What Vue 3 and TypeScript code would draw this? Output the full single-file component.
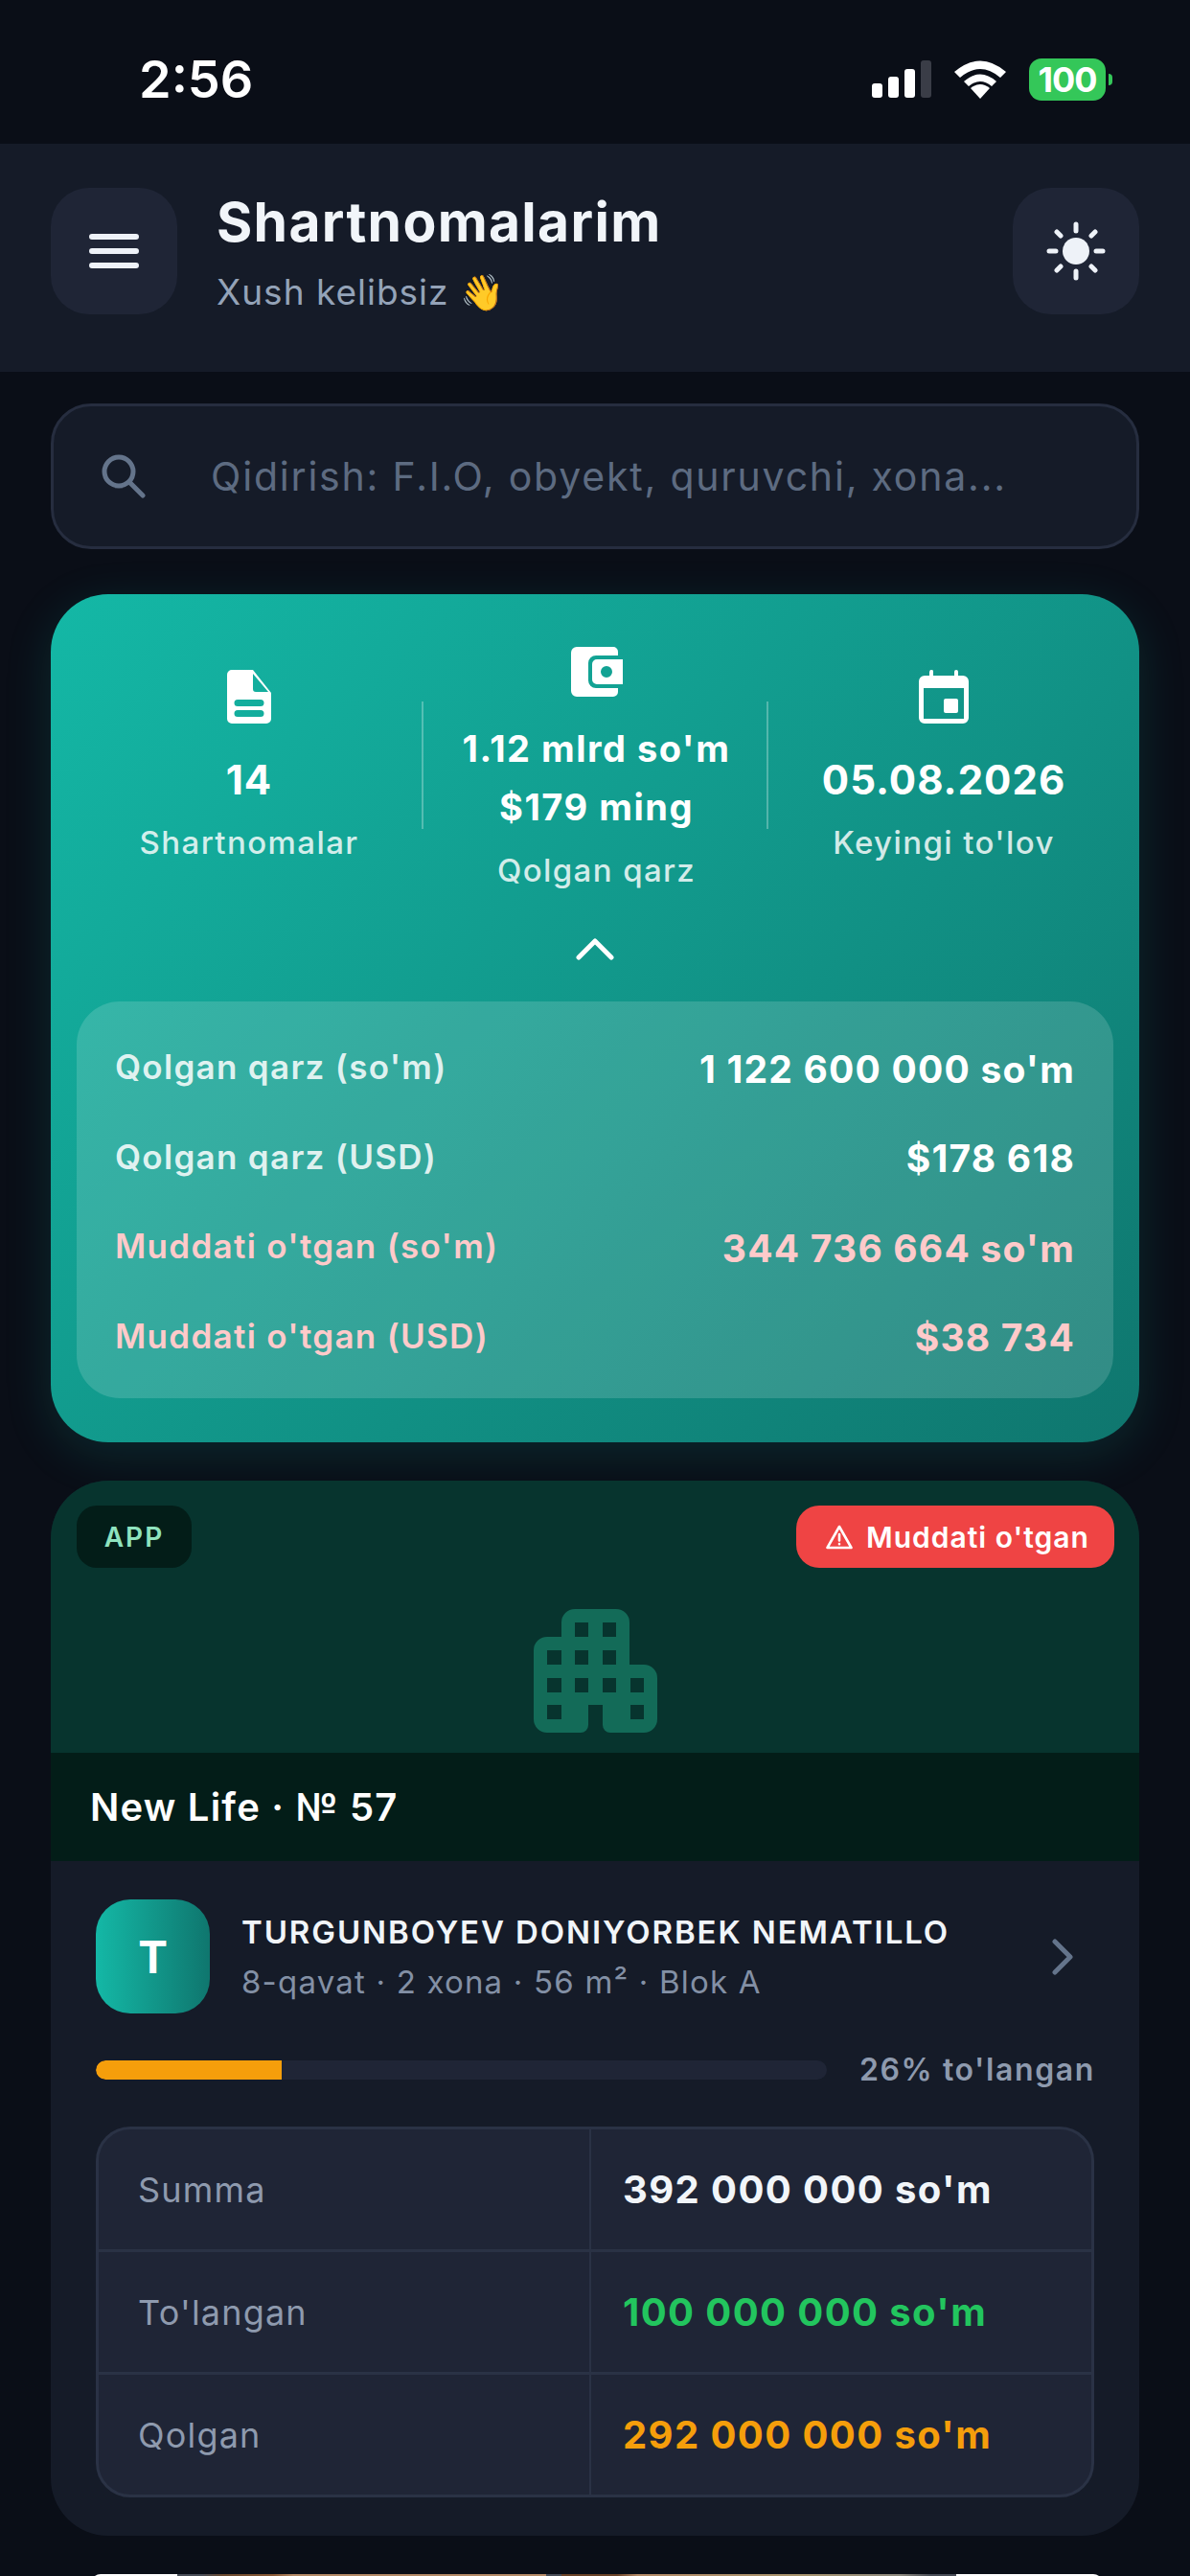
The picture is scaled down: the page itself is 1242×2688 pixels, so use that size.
<script setup lang="ts">
interface Stat { value: string[]; label: string; icon: string }
interface Row { label: string; value: string; overdue?: boolean }

const stats: Stat[] = [
  { value: ['14'], label: 'Shartnomalar', icon: 'doc' },
  { value: ["1.12 mlrd so'm", '$179 ming'], label: 'Qolgan qarz', icon: 'wallet' },
  { value: ['05.08.2026'], label: "Keyingi to'lov", icon: 'cal' }
]

const rows: Row[] = [
  { label: "Qolgan qarz (so'm)", value: "1 122 600 000 so'm" },
  { label: 'Qolgan qarz (USD)', value: '$178 618' },
  { label: "Muddati o'tgan (so'm)", value: "344 736 664 so'm", overdue: true },
  { label: "Muddati o'tgan (USD)", value: '$38 734', overdue: true }
]

const amounts = [
  { label: 'Summa', value: "392 000 000 so'm", cls: 'white' },
  { label: "To'langan", value: "100 000 000 so'm", cls: 'green' },
  { label: 'Qolgan', value: "292 000 000 so'm", cls: 'amber' }
]

const paid = 26
</script>

<template>
  <div class="screen">
    <div class="status">
      <span class="time">2:56</span>
      <div class="status-icons">
        <svg width="62" height="40" viewBox="0 0 62 40">
          <rect x="0" y="24" width="11" height="15" rx="3" fill="#fff" />
          <rect x="17" y="17" width="11" height="22" rx="3" fill="#fff" />
          <rect x="34" y="9" width="11" height="30" rx="3" fill="#fff" />
          <rect x="51" y="0" width="11" height="39" rx="3" fill="#3a3d47" />
        </svg>
        <svg width="54" height="40" viewBox="0 0 54 40">
          <path d="M27 40 L17 29 Q27 21 37 29 Z" fill="#fff" />
          <path d="M10 22 L15 27 Q27 17 39 27 L44 22 Q27 7 10 22 Z" fill="#fff" />
          <path d="M0 12 L6 18 Q27 0 48 18 L54 12 Q27 -11 0 12 Z" fill="#fff" />
        </svg>
        <div class="battery">
          <span class="battery-body">100</span>
          <span class="battery-tip"></span>
        </div>
      </div>
    </div>

    <header class="header">
      <button class="icon-btn">
        <svg width="52" height="40" viewBox="0 0 52 40" fill="none" stroke="#eef2f8" stroke-width="6" stroke-linecap="round">
          <path d="M3 5h46M3 20h46M3 35h46" />
        </svg>
      </button>
      <div class="titles">
        <div class="title">Shartnomalarim</div>
        <div class="subtitle">Xush kelibsiz 👋</div>
      </div>
      <button class="icon-btn">
        <svg width="62" height="62" viewBox="0 0 62 62" fill="none" stroke="#eef2f8" stroke-width="5" stroke-linecap="round">
          <circle cx="31" cy="31" r="14" fill="#eef2f8" stroke="none" />
          <path d="M31 3v7M31 52v7M3 31h7M52 31h7M11 11l4 4M47 47l4 4M11 51l4-4M47 15l4-4" />
        </svg>
      </button>
    </header>

    <main class="content">
      <div class="search">
        <svg width="50" height="50" viewBox="0 0 50 50" fill="none" stroke="#64748b" stroke-width="5" stroke-linecap="round">
          <circle cx="20" cy="20" r="15" />
          <path d="M31 31l14 14" />
        </svg>
        <span class="placeholder">Qidirish: F.I.O, obyekt, quruvchi, xona...</span>
      </div>

      <section class="hero">
        <div class="stats">
          <div v-for="s in stats" :key="s.label" class="stat">
            <svg v-if="s.icon === 'doc'" class="stat-icon" width="46" height="56" viewBox="0 0 46 56">
              <path fill="#fff" fill-rule="evenodd" d="M5 0h22l19 24v27a5 5 0 0 1-5 5H5a5 5 0 0 1-5-5V5a5 5 0 0 1 5-5zM27 4v16a3 3 0 0 0 3 3h13zM11 31a3 3 0 0 0 0 7h24a3 3 0 0 0 0-7zM11 42a3 3 0 0 0 0 7h24a3 3 0 0 0 0-7z" />
            </svg>
            <svg v-else-if="s.icon === 'wallet'" class="stat-icon" width="54" height="52" viewBox="0 0 54 52">
              <path fill="#fff" fill-rule="evenodd" d="M6 0h38a5 5 0 0 1 5 5v4H26a8 8 0 0 0-8 8v18a8 8 0 0 0 8 8h23v4a5 5 0 0 1-5 5H6a6 6 0 0 1-6-6V6a6 6 0 0 1 6-6z" />
              <path fill="#fff" fill-rule="evenodd" d="M27 13h27v26H27a5 5 0 0 1-5-5V18a5 5 0 0 1 5-5zM37 20a6 6 0 1 0 0 12 6 6 0 0 0 0-12z" />
            </svg>
            <svg v-else class="stat-icon" width="52" height="56" viewBox="0 0 52 56">
              <path fill="#fff" fill-rule="evenodd" d="M12 0a2 2 0 0 1 3 2v4h22V2a2 2 0 0 1 4 0v4h5a6 6 0 0 1 6 6v38a6 6 0 0 1-6 6H6a6 6 0 0 1-6-6V12a6 6 0 0 1 6-6h5V2zM5 19v32h42V19zM28 30h11a2 2 0 0 1 2 2v11a2 2 0 0 1-2 2H28a2 2 0 0 1-2-2V32a2 2 0 0 1 2-2z" />
            </svg>
            <div class="stat-values">
              <div v-for="v in s.value" :key="v" class="stat-value">{{ v }}</div>
            </div>
            <div class="stat-label">{{ s.label }}</div>
          </div>
        </div>
        <svg class="chevron-up" width="40" height="24" viewBox="0 0 40 24" fill="none" stroke="#fff" stroke-width="5" stroke-linecap="round" stroke-linejoin="round">
          <path d="M3 21L20 4l17 17" />
        </svg>
        <div class="breakdown">
          <div v-for="r in rows" :key="r.label" class="breakdown-row" :class="{ overdue: r.overdue }">
            <span class="b-label">{{ r.label }}</span>
            <span class="b-value">{{ r.value }}</span>
          </div>
        </div>
      </section>

      <article class="card">
        <div class="cover">
          <div class="badges">
            <span class="tag">APP</span>
            <span class="late">
              <svg width="28" height="26" viewBox="0 0 28 26" fill="none" stroke="#fff" stroke-width="2.6" stroke-linejoin="round" stroke-linecap="round">
                <path d="M14 2L26.5 24H1.5z" />
                <path d="M14 10v6.5M14 20v.2" />
              </svg>
              Muddati o'tgan
            </span>
          </div>
          <svg class="building" width="129" height="129" viewBox="0 0 129 129">
            <path fill="#136b58" fill-rule="evenodd" d="M29 14a14 14 0 0 1 14-14h43a14 14 0 0 1 14 14v44h15a14 14 0 0 1 14 14v43a14 14 0 0 1-14 14H80a8 8 0 0 1-8-8V100H57v21a8 8 0 0 1-8 8H14a14 14 0 0 1-14-14V43a14 14 0 0 1 14-14h15zM43 14v15h14V14zM72 14v15h14V14zM14 43v15h15V43zM43 43v15h14V43zM72 43v15h14V43zM14 72v15h15V72zM43 72v15h14V72zM72 72v15h14V72zM101 72v15h14V72zM14 100v15h15v-15zM101 100v15h14v-15z" />
          </svg>
          <div class="project">New Life · № 57</div>
        </div>

        <div class="card-body">
          <div class="person">
            <div class="avatar">T</div>
            <div class="person-info">
              <div class="person-name">TURGUNBOYEV DONIYORBEK NEMATILLO</div>
              <div class="person-sub">8-qavat · 2 xona · 56 m² · Blok A</div>
            </div>
            <svg width="24" height="38" viewBox="0 0 24 38" fill="none" stroke="#64748b" stroke-width="5" stroke-linecap="round" stroke-linejoin="round">
              <path d="M4 3l16 16L4 35" />
            </svg>
          </div>

          <div class="progress-row">
            <div class="track">
              <div class="fill" :style="{ width: paid * 0.98 + '%' }"></div>
            </div>
            <span class="progress-label">{{ paid }}% to'langan</span>
          </div>

          <div class="table">
            <div v-for="a in amounts" :key="a.label" class="table-row">
              <div class="cell cell-label">{{ a.label }}</div>
              <div class="cell cell-value" :class="a.cls">{{ a.value }}</div>
            </div>
          </div>
        </div>
      </article>

      <div class="next-photo"></div>
    </main>
  </div>
</template>

<style>
html, body { margin: 0; background: #0a0e17; }
</style>

<style scoped>
.screen {
  width: 1242px;
  height: 2688px;
  overflow: hidden;
  background: #0a0e17;
  font-family: Inter, "Noto Sans", sans-serif;
  color: #fff;
}
.status {
  height: 150px;
  box-sizing: border-box;
  padding: 0 81px 0 145px;
  display: flex;
  align-items: center;
  justify-content: space-between;
}
.time {
  font-size: 54px;
  font-weight: 600;
  margin-top: 14px;
}
.status-icons {
  display: flex;
  align-items: center;
  gap: 24px;
  margin-top: 16px;
}
.battery { display: flex; align-items: center; gap: 3px; }
.battery-body {
  width: 80px;
  height: 44px;
  border-radius: 13px;
  background: #34c759;
  text-align: center;
  line-height: 44px;
  font-size: 36px;
  font-weight: 700;
  letter-spacing: -1px;
}
.battery-tip {
  width: 4px;
  height: 12px;
  border-radius: 0 6px 6px 0;
  background: #34c759;
}
.header {
  height: 238px;
  box-sizing: border-box;
  background: #151b28;
  padding: 46px 53px 0;
  display: flex;
  align-items: flex-start;
}
.icon-btn {
  width: 132px;
  height: 132px;
  border: 0;
  padding: 0;
  border-radius: 40px;
  background: #1f2536;
  display: flex;
  align-items: center;
  justify-content: center;
  flex-shrink: 0;
}
.titles { flex: 1; margin-left: 41px; }
.title {
  font-size: 57px;
  font-weight: 700;
  line-height: 72px;
  color: #f1f5f9;
  letter-spacing: 1.3px;
}
.subtitle {
  font-size: 37px;
  line-height: 48px;
  margin-top: 13px;
  color: #94a3b8;
  letter-spacing: 1px;
}
.content {
  padding: 33px 53px 0;
  display: flex;
  flex-direction: column;
}
.search {
  height: 152px;
  box-sizing: border-box;
  border: 3px solid #262d3f;
  border-radius: 42px;
  background: #151b28;
  display: flex;
  align-items: center;
  padding-left: 48px;
  gap: 66px;
}
.placeholder {
  font-size: 41px;
  color: #5d6b81;
  letter-spacing: 1.8px;
}
.hero {
  margin-top: 47px;
  height: 885px;
  box-sizing: border-box;
  border-radius: 60px;
  background: linear-gradient(135deg, #14b8a6, #0f766e);
  box-shadow: 0 12px 50px rgba(20, 184, 166, 0.16);
  padding: 55px 27px 0;
  display: flex;
  flex-direction: column;
  align-items: center;
}
.stats {
  width: 100%;
  height: 274px;
  display: grid;
  grid-template-columns: 360px 362px 361px;
}
.stat {
  display: flex;
  flex-direction: column;
  align-items: center;
  justify-content: flex-start;
  position: relative;
}
.stat:nth-child(1) { padding-top: 24px; }
.stat:nth-child(2) { padding-left: 3px; }
.stat:nth-child(3) { padding: 24px 0 0 5px; }
.stat:nth-child(2)::before, .stat:nth-child(2)::after {
  content: "";
  position: absolute;
  top: 57px;
  width: 2px;
  height: 133px;
  background: rgba(255, 255, 255, 0.28);
}
.stat:nth-child(2)::before { left: 0; }
.stat:nth-child(2)::after { right: 0; }
.stat-icon { flex-shrink: 0; }
.stat-values { margin-top: 24px; }
.stat:nth-child(1) .stat-values, .stat:nth-child(3) .stat-values { margin-top: 28px; }
.stat-value {
  font-size: 38px;
  font-weight: 700;
  line-height: 61px;
  text-align: center;
  letter-spacing: 1.5px;
}
.stat:nth-child(3) .stat-value, .stat:nth-child(1) .stat-value { font-size: 42px; letter-spacing: 1px; }
.stat-label {
  font-size: 33px;
  line-height: 46px;
  margin-top: 12px;
  font-weight: 500;
  color: rgba(255, 255, 255, 0.82);
  letter-spacing: 1.4px;
}
.chevron-up { margin-top: 29px; }
.breakdown {
  width: 100%;
  height: 414px;
  box-sizing: border-box;
  margin-top: 43px;
  border-radius: 45px;
  background: rgba(255, 255, 255, 0.15);
  padding: 24px 40px 17px;
  display: flex;
  flex-direction: column;
  justify-content: space-between;
}
.breakdown-row {
  height: 92px;
  display: flex;
  align-items: center;
  justify-content: space-between;
}
.b-label {
  font-size: 35px;
  font-weight: 600;
  color: rgba(255, 255, 255, 0.85);
  margin-top: -4px;
  letter-spacing: 1.3px;
}
.b-value { font-size: 39px; font-weight: 700; letter-spacing: 1.2px; }
.overdue .b-label, .overdue .b-value { color: #fecaca; }
.card {
  margin-top: 40px;
  border-radius: 60px;
  background: #151b28;
  overflow: hidden;
}
.cover {
  height: 397px;
  background: #07342e;
  position: relative;
  display: flex;
  flex-direction: column;
  align-items: center;
}
.badges {
  position: absolute;
  top: 26px;
  left: 27px;
  right: 26px;
  display: flex;
  justify-content: space-between;
}
.tag {
  width: 120px;
  height: 65px;
  border-radius: 21px;
  background: #031d18;
  color: #8fe3bf;
  font-size: 28px;
  font-weight: 600;
  letter-spacing: 2px;
  display: flex;
  align-items: center;
  justify-content: center;
}
.late {
  width: 332px;
  height: 65px;
  box-sizing: border-box;
  padding-left: 5px;
  border-radius: 24px;
  background: #ef4444;
  font-size: 30px;
  font-weight: 600;
  letter-spacing: 1px;
  display: flex;
  align-items: center;
  justify-content: center;
  gap: 14px;
}
.building { margin-top: 134px; }
.project {
  position: absolute;
  left: 0;
  right: 0;
  bottom: 0;
  height: 113px;
  box-sizing: border-box;
  background: #031d18;
  padding-left: 41px;
  display: flex;
  align-items: center;
  font-size: 40px;
  font-weight: 600;
  letter-spacing: 1.2px;
}
.card-body { padding: 40px 47px 40px; }
.person { display: flex; align-items: center; }
.avatar {
  width: 119px;
  height: 119px;
  border-radius: 36px;
  background: linear-gradient(90deg, #14b8a6, #0f766e);
  display: flex;
  align-items: center;
  justify-content: center;
  font-size: 46px;
  font-weight: 700;
  flex-shrink: 0;
}
.person-info { flex: 1; margin-left: 33px; }
.person-name {
  font-size: 33px;
  font-weight: 600;
  line-height: 46px;
  color: #f1f5f9;
  white-space: nowrap;
  letter-spacing: 1.9px;
}
.person-sub {
  font-size: 33px;
  line-height: 46px;
  margin-top: 6px;
  color: #8390a5;
  letter-spacing: 1.2px;
}
.person svg { margin-right: 21px; }
.progress-row {
  display: flex;
  align-items: center;
  margin-top: 39px;
  gap: 34px;
}
.track {
  width: 763px;
  height: 20px;
  border-radius: 10px;
  background: #1f2536;
  overflow: hidden;
  flex-shrink: 0;
}
.fill { height: 100%; background: #f59e0b; border-radius: 10px 0 0 10px; }
.progress-label {
  font-size: 32px;
  font-weight: 600;
  color: #8e9aae;
  white-space: nowrap;
  letter-spacing: 1.6px;
}
.table {
  margin-top: 40px;
  border: 3px solid #2a3245;
  border-radius: 36px;
  background: #1f2536;
  overflow: hidden;
}
.table-row {
  height: 125px;
  display: grid;
  grid-template-columns: 514px 1fr;
}
.table-row + .table-row { border-top: 3px solid #2a3245; }
.cell { display: flex; align-items: center; }
.cell-label {
  padding-left: 41px;
  font-size: 36px;
  color: #8e9aae;
  border-right: 2px solid #2a3245;
  letter-spacing: 1.2px;
}
.cell-value {
  padding-left: 33px;
  font-size: 40px;
  font-weight: 700;
  letter-spacing: 1.4px;
}
.white { color: #f1f5f9; }
.green { color: #22c55e; }
.amber { color: #f59e0b; }
.next-photo {
  margin: 40px 38px 0 42px;
  height: 10px;
  border-radius: 24px 24px 0 0;
  background: linear-gradient(90deg, #fff 8.5%, #4a4e58 8.5%, #4a4e58 11%, #6b4a30 13%, #8a5a36 18%, #b58b68 20%, #b58b68 45%, #4a4e58 45%, #4a4e58 46.5%, #6b4328 46.5%, #6b4328 52%, #b58b68 54%, #a8946e 70%, #8e8a80 80%, #4a4e58 83%, #4a4e58 85.5%, #fff 85.5%);
}
</style>
